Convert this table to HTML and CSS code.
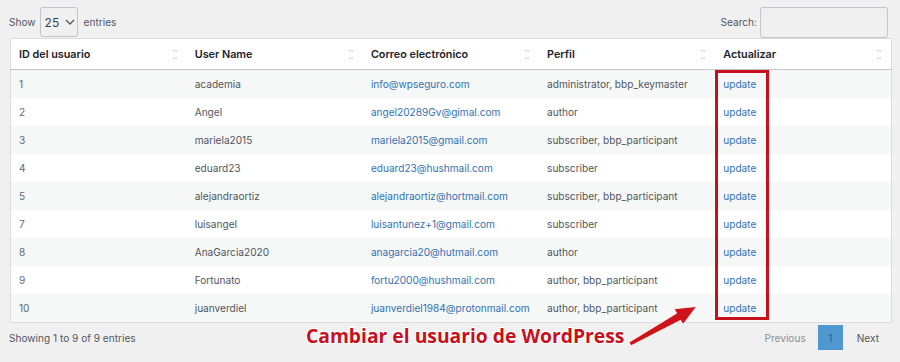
FILE: index.html
```html
<!DOCTYPE html>
<html lang="es">
<head>
<meta charset="utf-8">
<title>Usuarios</title>
<link rel="stylesheet" href="styles.css">
</head>
<body>
<div class="wrap">
  <div class="top">
    <label class="length">Show <span class="select">25 <svg class="chev" width="10" height="6" viewBox="0 0 10 6"><path d="M1 1l4 4 4-4" fill="none" stroke="#50575e" stroke-width="1.3"/></svg></span> entries</label>
    <label class="search">Search: <span class="input"></span></label>
  </div>
  <table class="users">
    <thead>
      <tr>
        <th>ID del usuario<i class="sort"></i></th>
        <th>User Name<i class="sort"></i></th>
        <th>Correo electrónico<i class="sort"></i></th>
        <th>Perfil<i class="sort"></i></th>
        <th>Actualizar<i class="sort"></i></th>
      </tr>
    </thead>
    <tbody>
      <tr><td class="num">1</td><td>academia</td><td><a href="#">info@wpseguro.com</a></td><td>administrator, bbp_keymaster</td><td><a href="#">update</a></td></tr>
      <tr><td class="num">2</td><td>Angel</td><td><a href="#">angel20289Gv@gimal.com</a></td><td>author</td><td><a href="#">update</a></td></tr>
      <tr><td class="num">3</td><td>mariela2015</td><td><a href="#">mariela2015@gmail.com</a></td><td>subscriber, bbp_participant</td><td><a href="#">update</a></td></tr>
      <tr><td class="num">4</td><td>eduard23</td><td><a href="#">eduard23@hushmail.com</a></td><td>subscriber</td><td><a href="#">update</a></td></tr>
      <tr><td class="num">5</td><td>alejandraortiz</td><td><a href="#">alejandraortiz@hortmail.com</a></td><td>subscriber, bbp_participant</td><td><a href="#">update</a></td></tr>
      <tr><td class="num">7</td><td>luisangel</td><td><a href="#">luisantunez+1@gmail.com</a></td><td>subscriber</td><td><a href="#">update</a></td></tr>
      <tr><td class="num">8</td><td>AnaGarcia2020</td><td><a href="#">anagarcia20@hutmail.com</a></td><td>author</td><td><a href="#">update</a></td></tr>
      <tr><td class="num">9</td><td>Fortunato</td><td><a href="#">fortu2000@hushmail.com</a></td><td>author, bbp_participant</td><td><a href="#">update</a></td></tr>
      <tr><td class="num">10</td><td>juanverdiel</td><td><a href="#">juanverdiel1984@protonmail.com</a></td><td>author, bbp_participant</td><td><a href="#">update</a></td></tr>
    </tbody>
  </table>
  <div class="bottom">
    <div class="info">Showing 1 to 9 of 9 entries</div>
    <div class="paging">
      <span class="prev">Previous</span>
      <span class="page">1</span>
      <span class="next">Next</span>
    </div>
  </div>
  <div class="highlight"></div>
  <div class="note">Cambiar el usuario de WordPress</div>
  <svg class="arrow" width="80" height="50" viewBox="0 0 80 50">
    <path d="M4 42.3 L51.6 13.3 L49.2 8.8 L71.5 6.5 L58 24.5 L55.6 20.3 L6 45.7 Z" fill="#d0121b" stroke="#fff" stroke-width="0.8" stroke-linejoin="round"/>
  </svg>
</div>
</body>
</html>
```
FILE: styles.css
```css
html, body {
  margin: 0;
  padding: 0;
  background: #f0f0f1;
}
body {
  font-family: Inter, "Noto Sans", sans-serif;
  font-size: 10.1px;
  color: #50575e;
}
.wrap {
  position: relative;
  width: 900px;
  height: 362px;
  padding: 6px 9px 0 10px;
  box-sizing: border-box;
}
.top {
  display: flex;
  justify-content: space-between;
  align-items: center;
  height: 32px;
}
.length {
  display: flex;
  align-items: center;
  gap: 4px;
  margin-left: -1px;
}
.select {
  display: inline-flex;
  align-items: center;
  gap: 6px;
  box-sizing: border-box;
  width: 38px;
  height: 30px;
  padding-left: 4px;
  border: 1px solid #c3c4c7;
  border-radius: 3px;
  font-size: 12px;
  color: #3c434a;
  margin-right: 2px;
}
.search {
  display: flex;
  align-items: center;
  gap: 3px;
  margin-right: 3px;
}
.input {
  display: block;
  width: 128px;
  height: 31px;
  box-sizing: border-box;
  border: 1px solid #c3c4c7;
  border-radius: 3px;
  background: #f0f0f1;
}
.users {
  border-collapse: collapse;
  table-layout: fixed;
  width: 882px;
  background: #fff;
  border: 1px solid #dcdcde;
}
.users th {
  position: relative;
  height: 30px;
  padding: 0 8px;
  text-align: left;
  font-size: 10.8px;
  font-weight: 600;
  color: #1d2327;
  border-bottom: 1px solid #c3c4c7;
}
.sort {
  position: absolute;
  right: 10px;
  top: 11px;
  width: 4px;
  height: 9px;
  background:
    linear-gradient(to top left, transparent 50%, #dcdcde 50%) 0 0/2px 3px no-repeat,
    linear-gradient(to top right, transparent 50%, #dcdcde 50%) 2px 0/2px 3px no-repeat,
    linear-gradient(to bottom left, transparent 50%, #dcdcde 50%) 0 6px/2px 3px no-repeat,
    linear-gradient(to bottom right, transparent 50%, #dcdcde 50%) 2px 6px/2px 3px no-repeat;
}
.users td {
  height: 28px;
  padding: 0 8px;
  white-space: nowrap;
  overflow: hidden;
}
.users td.num {
  color: #646970;
}
.users tbody tr:nth-child(odd) {
  background: #f6f7f7;
}
.users a {
  color: #3473b3;
  text-decoration: none;
}
.bottom {
  display: flex;
  justify-content: space-between;
  align-items: center;
  height: 29px;
}
.info {
  margin-left: -1px;
}
.paging {
  display: flex;
  align-items: center;
  margin-right: 12px;
}
.prev {
  color: #8c8f94;
  margin-right: 12px;
}
.page {
  display: flex;
  align-items: center;
  justify-content: center;
  width: 25px;
  height: 25px;
  background: #4f97cf;
  color: #2f5f8f;
  margin-right: 14px;
}
.next {
  color: #50575e;
}
.highlight {
  position: absolute;
  left: 715px;
  top: 70px;
  width: 54px;
  height: 250px;
  box-sizing: border-box;
  border: 3px solid #c8101c;
}
.note {
  position: absolute;
  left: 306px;
  top: 322px;
  font-family: "Open Sans", "Noto Sans", sans-serif;
  font-weight: 700;
  font-size: 19.3px;
  color: #c8101c;
  text-shadow: 1px 1px 0 #fff, -1px -1px 0 #fff, 1px -1px 0 #fff, -1px 1px 0 #fff;
  white-space: nowrap;
}
.arrow {
  position: absolute;
  left: 625px;
  top: 300px;
}
```
